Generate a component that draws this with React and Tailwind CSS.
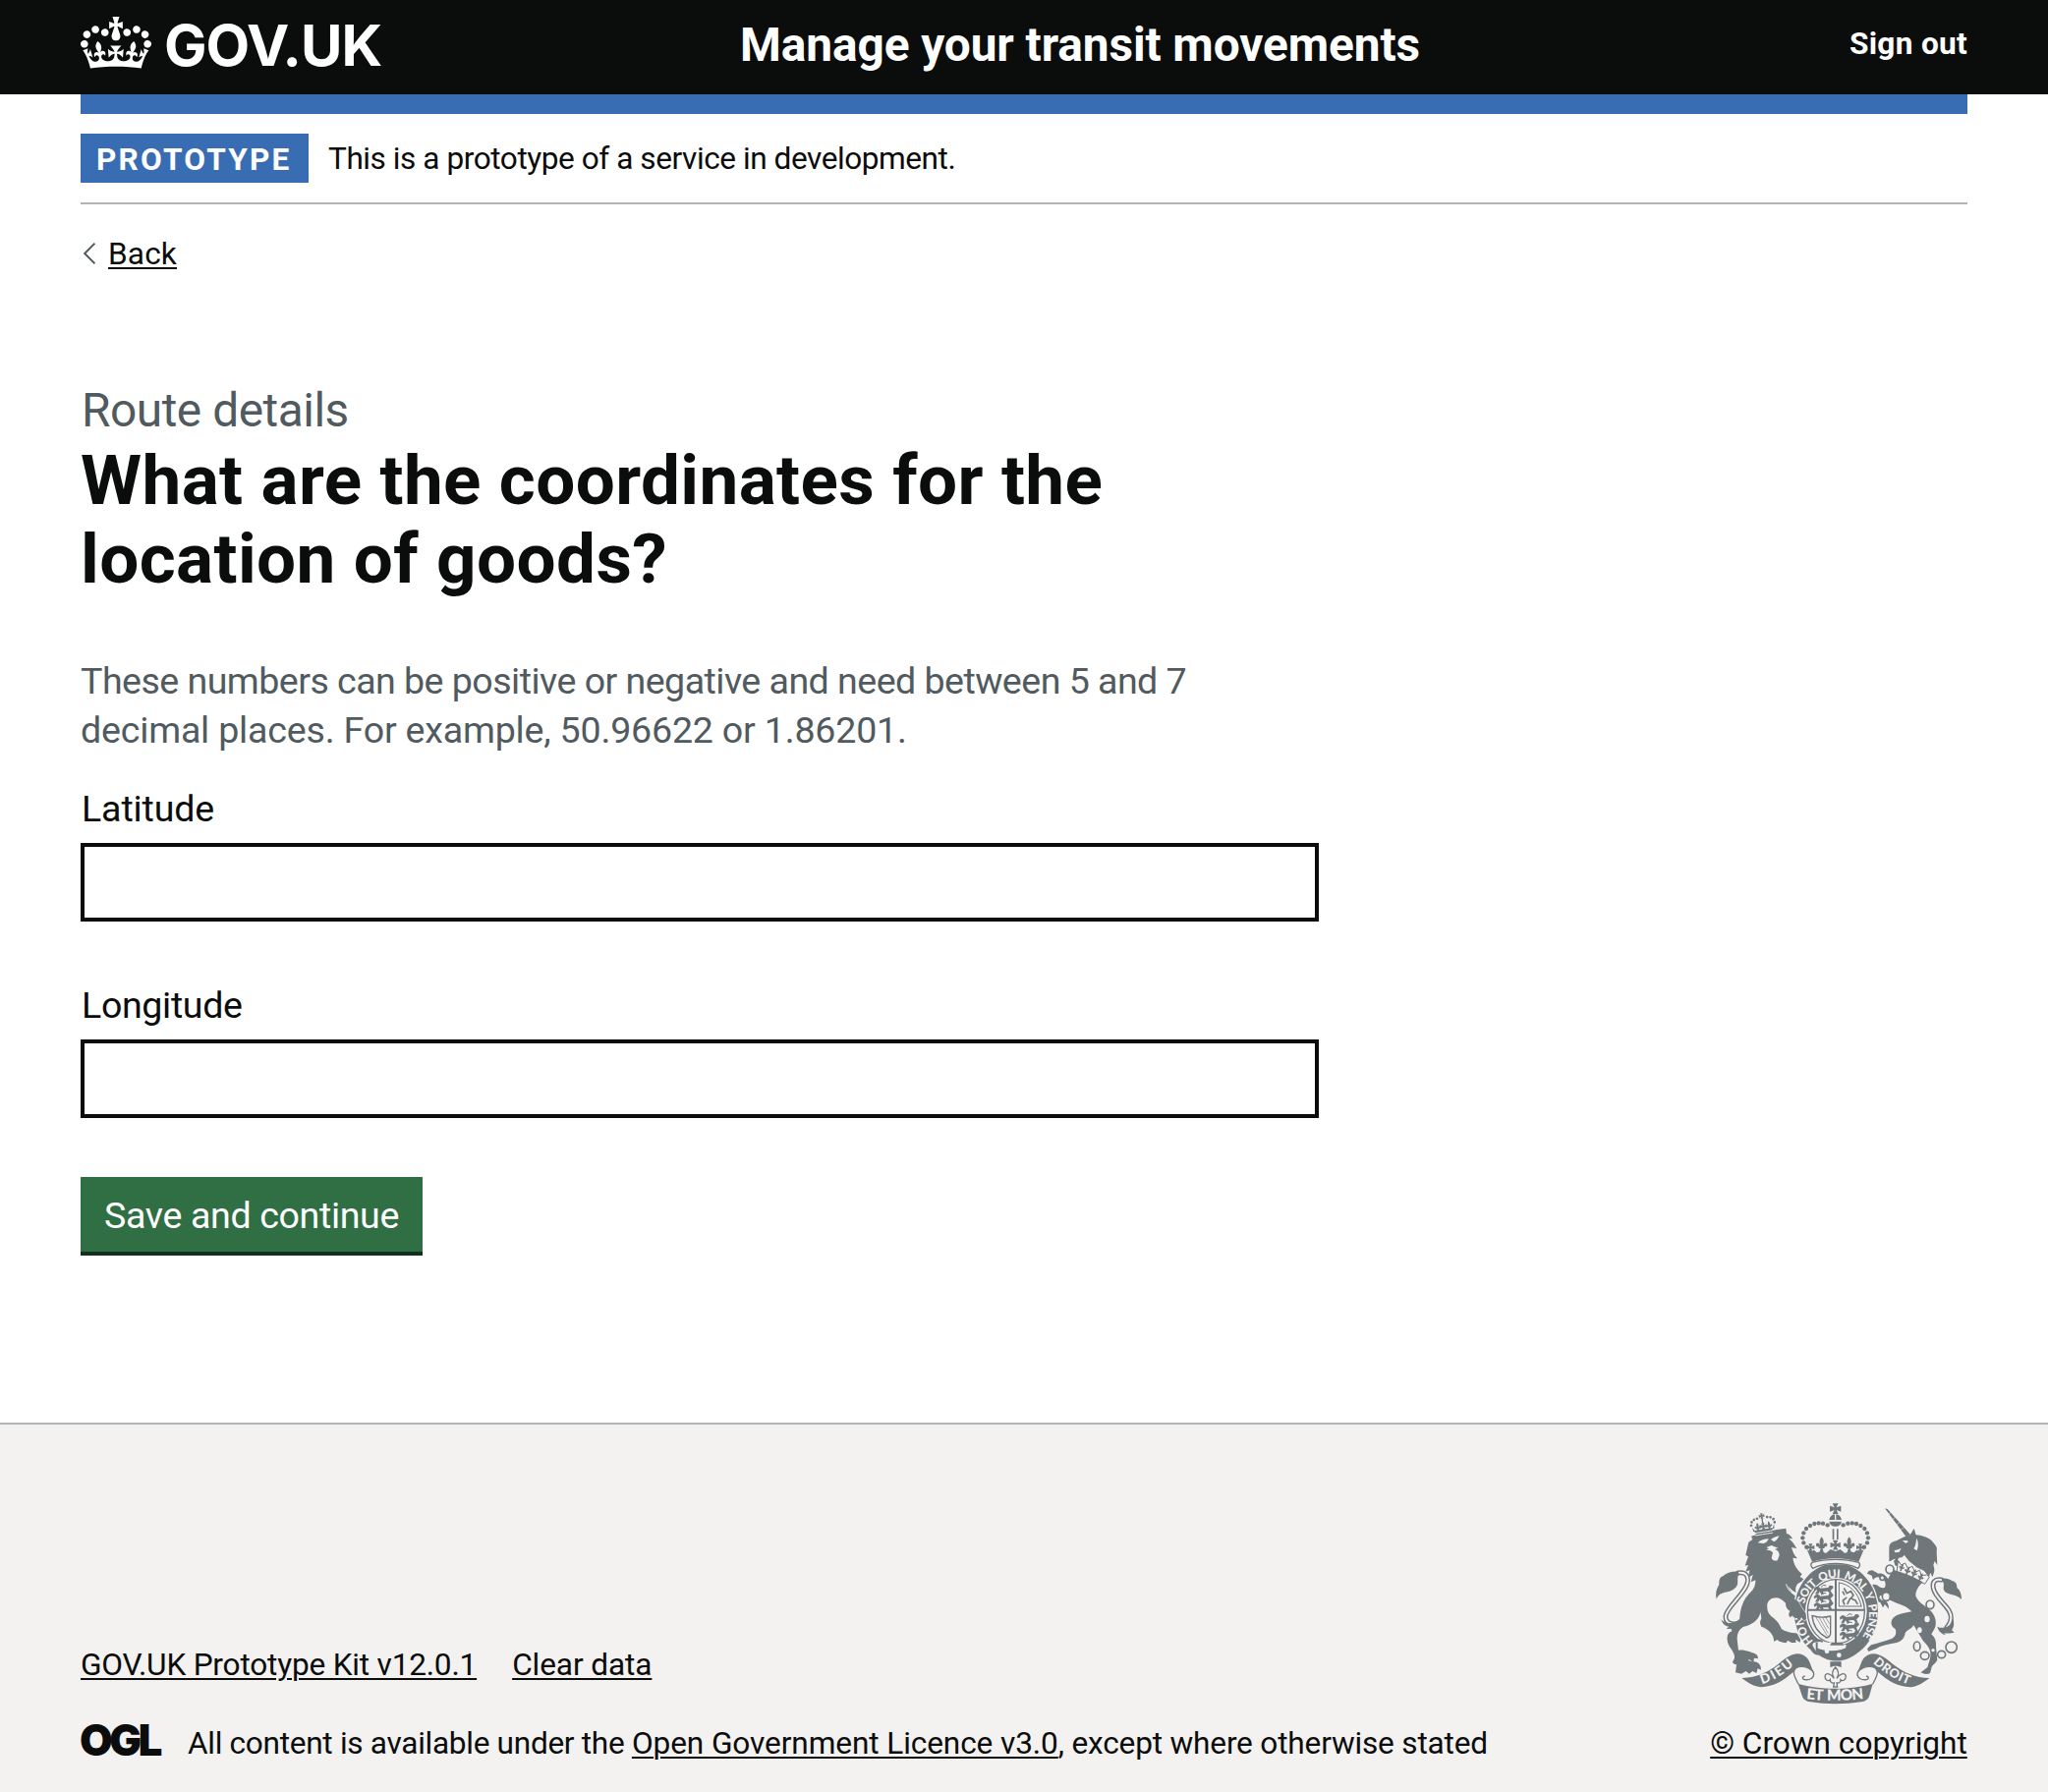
function Crown() {
  return (
    <svg viewBox="0 0 132 97" className="h-[53px] w-[72px] shrink-0 fill-white" aria-hidden="true">
      <path
        fillRule="evenodd"
        d="M25 30.2c3.5 1.5 7.7-.2 9.1-3.7 1.5-3.6-.2-7.8-3.9-9.2-3.6-1.4-7.6.3-9.1 3.9-1.4 3.5.3 7.5 3.9 9zM9 39.5c3.6 1.5 7.8-.2 9.2-3.7 1.5-3.6-.2-7.8-3.9-9.1-3.6-1.5-7.6.2-9.1 3.8-1.4 3.5.3 7.5 3.8 9zM4.4 57.2c3.5 1.5 7.7-.2 9.1-3.8 1.5-3.6-.2-7.7-3.9-9.1-3.5-1.5-7.6.3-9.1 3.8-1.4 3.5.3 7.6 3.9 9.1zm38.3-21.4c3.5 1.5 7.7-.2 9.1-3.8 1.5-3.6-.2-7.7-3.9-9.1-3.6-1.5-7.6.3-9.1 3.8-1.3 3.6.4 7.7 3.9 9.1zm64.4-5.6c-3.6 1.5-7.8-.2-9.1-3.7-1.5-3.6.2-7.8 3.8-9.2 3.6-1.4 7.7.3 9.2 3.9 1.3 3.5-.4 7.5-3.9 9zm15.9 9.3c-3.6 1.5-7.7-.2-9.1-3.7-1.5-3.6.2-7.8 3.7-9.1 3.6-1.5 7.7.2 9.2 3.8 1.5 3.5-.3 7.5-3.8 9zm4.7 17.7c-3.6 1.5-7.8-.2-9.2-3.8-1.5-3.6.2-7.7 3.9-9.1 3.6-1.5 7.7.3 9.2 3.8 1.3 3.5-.4 7.6-3.9 9.1zM89.3 35.8c-3.6 1.5-7.8-.2-9.2-3.8-1.4-3.6.2-7.7 3.9-9.1 3.6-1.5 7.7.3 9.2 3.8 1.4 3.6-.3 7.7-3.9 9.1zM69.7 17.7l8.9 4.7V9.3l-8.9 2.8c-.2-.3-.5-.6-.9-.9L72.4 0H59.6l3.5 11.2c-.3.3-.6.5-.9.9l-8.8-2.8v13.1l8.8-4.7c.3.3.6.7.9.9l-5 15.4v.1c-.2.8-.4 1.6-.4 2.4 0 4.1 3.1 7.5 7 8.1h.2c.3 0 .7.1 1 .1.4 0 .7 0 1-.1h.2c4-.6 7.1-4.1 7.1-8.1 0-.8-.1-1.7-.4-2.4V34l-5.1-15.4c.4-.2.7-.6 1-.9zM66 92.8c16.9 0 32.8 1.1 47.1 3.2 4-16.9 8.9-26.7 14-33.5l-9.6-3.4c1 4.9 1.1 7.2 0 10.2-1.5-1.4-3-4.3-4.2-8.7L108.6 76c2.8-2 5-3.2 7.5-3.3-4.4 9.4-10 11.9-13.6 11.2-4.3-.8-6.3-4.6-5.6-7.9 1-4.7 5.7-5.9 8-.5 4.3-8.7-3-11.4-7.6-8.8 7.1-7.2 7.9-13.5 2.1-21.1-8 6.1-8.1 12.3-4.5 20.8-4.7-5.4-12.1-2.5-9.5 6.2 3.4-5.2 7.9-2 7.2 3.1-.6 4.3-6.4 7.8-13.5 7.2-10.3-.9-10.9-8-11.2-13.8 2.5-.5 7.1 1.8 11 7.3L80.2 60c-4.1 4.4-8 5.3-12.3 5.4 1.4-4.4 8-11.6 8-11.6H55.5s6.4 7.2 7.9 11.6c-4.2-.1-8-1-12.3-5.4l1.4 16.4c3.9-5.5 8.5-7.7 10.9-7.3-.3 5.8-.9 12.8-11.1 13.8-7.2.6-12.9-2.9-13.5-7.2-.7-5 3.8-8.3 7.1-3.1 2.7-8.7-4.6-11.6-9.4-6.2 3.7-8.5 3.6-14.7-4.6-20.8-5.8 7.6-5 13.9 2.2 21.1-4.7-2.6-11.9.1-7.7 8.8 2.3-5.5 7.1-4.2 8.1.5.7 3.3-1.3 7.1-5.7 7.9-3.5.7-9-1.8-13.5-11.2 2.5.1 4.7 1.3 7.5 3.3l-4.7-15.4c-1.2 4.4-2.7 7.2-4.3 8.7-1.1-3-.9-5.3 0-10.2l-9.5 3.4c5 6.9 9.9 16.7 14 33.5 14.8-2.1 30.8-3.2 47.7-3.2z"
      />
    </svg>
  );
}

const G = "#6f777b";
const BG = "#f3f2f1";

const BEADS = [
  [419, 126], [405, 121], [392, 120], [379, 122], [366, 128], [354, 137],
  [346, 150], [343, 165], [346, 180], [355, 193],
];

function Fleur({ x, y, s = 1, r = 0 }) {
  return (
    <path
      transform={`translate(${x} ${y}) rotate(${r}) scale(${s})`}
      d="M0-22C7-13 8-7 4 3c5-9 14-8 13 1-1 5-6 5-7 2 0 7-5 8-7 7l3 12H-6l3-12c-2 1-7 0-7-7-1 3-6 3-7-2-1-9 8-10 13-1-4-10-3-16 4-25z"
    />
  );
}

function Cross({ x, y, s = 1 }) {
  return (
    <path
      transform={`translate(${x} ${y}) scale(${s})`}
      d="M-9-16H9L3-4 17-9V9L3 4l6 12H-9l6-12-14 5V-9l14 5z"
    />
  );
}

function Passant({ x, y }) {
  return (
    <g transform={`translate(${x} ${y})`}>
      <path d="M2 2l8-7 8 2 4 4 24-2 4-7 9 1 3 6-5 5-4 4 5 9-7 1-6-8-15 1 3 8-8 0-5-8-5 8-9-1 6-9-1-4-7 4z" />
      <path d="M24-3l8-6 8 2" fill="none" stroke={G} strokeWidth="3" />
    </g>
  );
}

function RibbonHalf() {
  return (
    <>
      <path
        fill={G}
        d="M157 593C200 592 235 577 268 551 290 533 305 520 328 519c22 1 32 14 38 30 4 12 8 21 12 27-14-8-22-16-34-16-10 1-20 6-30 15-30 26-58 44-99 46-22-2-40-14-58-28z"
      />
      <path
        fill={BG}
        stroke={G}
        strokeWidth="4"
        d="M330 612c-6-14-14-24-14-36 1-12 12-19 28-18 14 2 30 10 33 21 1 14-12 21-28 19-8-1-8-10 1-11"
      />
    </>
  );
}

function Crest({ className }) {
  return (
    <svg viewBox="78 57 750 616" className={className} fill={G} aria-hidden="true">
      {/* tails */}
      <g fill="none" strokeLinecap="round">
        <path stroke={G} strokeWidth="15" d="M146 272c22-4 34 8 28 32-8 32-64 74-66 100-1 14 8 22 22 24 16 2 28-6 34-20" />
        <path stroke={BG} strokeWidth="6" d="M146 272c22-4 34 8 28 32-8 32-64 74-66 100-1 14 8 22 22 24 16 2 28-6 34-20" />
        <path stroke={G} strokeWidth="15" d="M766 293c-20-4-28 8-24 26 8 36 56 58 54 90-1 14-6 22-14 30" />
        <path stroke={BG} strokeWidth="6" d="M766 293c-20-4-28 8-24 26 8 36 56 58 54 90-1 14-6 22-14 30" />
      </g>
      <path d="M146 268c-20-1-36 4-46 14-12 4-12 14-12 26-8 12-12 26-8 44 6-16 20-20 34-22 14-4 24-10 30-22 2-14-2-26 6-32z" />
      <path d="M94 414c10 12 28 14 42 8 10-4 20-12 24-20-2 18-8 28-18 34-10 8-22 8-32 6l8-6c-10 0-20-8-24-22z" />
      <path d="M766 289c14-2 24 0 34 8 12 2 14 12 14 20 10 8 14 20 14 36-8-10-22-14-34-16-18-4-24-14-20-26 0-10-4-16-8-22z" />
      <path d="M754 436c12 6 24 4 34-2 8-6 12-14 14-22 4 14 4 26-4 34l8 8c-12 2-22 4-32 2l6 6c-14-4-22-12-26-26z" />

      {/* lion */}
      <path d="M178 178l12-8-4-10c30-10 66-20 106-24l2 16c10 2 14 8 18 16l-12-2c10 8 18 18 25 32l-16-4c4 14 8 24 18 34l-14-2c2 16 8 28 18 40l10 10-6 8 14 8-22 14c-6 10-8 20-2 26-8-2-16-8-28-22 8 20 22 30 38 40l14 46-10 20c-8-2-6-10-10-14l-6 14c-8 0-10-8-8-16l-10 8c-6-6-6-12 0-20-10-4-14-14-14-24-12-14-26-20-42-14-12 6-16 16-14 28 0 16 10 26 22 34 10 8 16 18 22 32 10 6 26 12 44 12l16 8-4 20c-6-2-8-6-14-8l2 8c-12 4-20-2-26-6l-4 8c-16-2-24-6-28-10l-10 6c2-20-14-38-38-46-4-8-6-14 0-24l-2-20c-8 26-26 38-52 44-14 8-20 20-20 38l4 34c14-2 30 2 42 8 12 2 18 8 18 18l-12-2-2 12-14-8-8 14-10-10-22 12c-6-2-8-4-10-8l6-12c2-22-22-34-22-56-2-14 4-22 14-26l-2-8c16-6 26-18 26-34 2-30 12-58 32-76 12-10 16-22 16-38l-14 6 6-22-14 8 4-22-12 4 8-20-10 2 10-28-8-4 4-18z" />
      <path d="M142 544l16-8 44 8c10 4 14 12 14 24l-10-4-4 14-12-6-10 8-10-8-14 8-18-4z" />
      <g fill={BG}>
        <path d="M206 180c8-8 20-12 34-12l-8 10-8 4zM246 170c8-6 16-10 26-11l-8 12-8 6z" />
        <path d="M232 194l16-6 20 8-10 4c8 2 14 8 14 18l-6 16c-10 2-16-2-18-8l4-16c-4-6-10-8-20-8l8-4z" />
      </g>
      <path stroke={BG} strokeWidth="3" fill="none" d="M293 306c4 18 16 28 30 36" />
      {/* lion's crown */}
      <g transform="rotate(-9 220 125)">
        <path d="M193 139h56l-3 14h-50z" />
        <path stroke={BG} strokeWidth="2.5" d="M194 147h54M194 154h54" />
        {[[186, 122], [189, 112], [197, 106], [207, 104], [238, 104], [248, 106], [256, 113], [258, 123]].map(([x, y]) => (
          <circle key={`${x}-${y}`} cx={x} cy={y} r="4" />
        ))}
        <Cross x={222} y={98} s={0.5} />
        <Fleur x={205} y={129} s={0.55} />
        <Cross x={222} y={130} s={0.6} />
        <Fleur x={240} y={129} s={0.55} />
        <path d="M220 104h4v20h-4zM188 128l8 14h-6zM256 128l-8 14h6z" />
      </g>

      {/* unicorn */}
      <path d="M594 75l8 2 70 78-12 8z" />
      <path stroke={BG} strokeWidth="1.5" d="M606 92l6-4M618 108l7-5M630 124l9-6M643 140l9-6" />
      <path d="M607 198c0-12 4-18 14-22 12-2 18-8 32-14l18-6 12-20 6 20c22 2 40 8 52 22 8 10 14 14 11 28l2 42-8-12-4 12c6 16 2 24-3 37l-6-14-4 12-16-18-22-10-24-20-14-18c-2 4-8 10-14 8l-6 6 8 10-8 12-8-4-4-14 6-6c-8 0-12 6-20 8z" />
      <path fill={BG} d="M648 174c6-2 14-2 18 2l-8 6zM622 204l14-4 8-4-6 12-12 2zM690 166c8 12 6 26 2 38l-10-6c6-10 8-20 8-32z" />
      <path fill={BG} stroke={G} strokeWidth="3" d="M634 236l10 12 12-6 8 16 14-6 8 18 14-6 6 16 16-2 8 6-14 22c-28-16-56-24-86-34z" />
      <g>
        <Fleur x={646} y={254} s={0.5} r={20} />
        <Fleur x={664} y={264} s={0.55} r={20} />
        <Fleur x={684} y={272} s={0.55} r={24} />
        <Fleur x={704} y={284} s={0.55} r={26} />
      </g>
      <path d="M618 262c30 8 62 20 92 38-12 12-22 24-22 42 8 22 30 30 46 46 14 14 18 32 14 48-4 12-10 16-12 24 10 6 16 20 14 38l4 40c-6 10-12 14-16 18l-6 22c-8 4-18 4-28-2l20-16 8-26c6-28-8-40-22-56l-28-46c-8 12-20 14-26 24-2 16-12 26-30 30-22 4-44 8-60 18l-22 8-4-8 12-12c24-8 46-12 64-20 12-6 14-18 10-28-10-6-14-14-12-24 4-18 24-22 40-26l22-4c-10-12-26-20-46-26-14-4-26-12-38-22-10-4-16 0-14 8 6 6 12 8 20 8 6 6 8 14 8 24l-12-14-6 10-8-16c-12-2-20-8-24-18l-2-18-8-12c8-8 16-8 26-4 6 6 14 10 22 6 4-10 2-20-10-28-14-6-20-2-26 6l-4-14-14-6c2-8 8-10 16-10l18 10c12-2 22 4 30 16z" />
      <g fill={BG}>
        <ellipse cx="723" cy="413" rx="8" ry="10" />
        <ellipse cx="700" cy="447" rx="7" ry="9" />
        <circle cx="741" cy="508" r="5" />
      </g>
      <g fill={BG} stroke={G} strokeWidth="5">
        <ellipse cx="609" cy="261" rx="12" ry="13" />
        <ellipse cx="598" cy="344" rx="12" ry="13" />
        <circle cx="586" cy="287" r="7" />
        <ellipse cx="732" cy="369" rx="12" ry="13" />
        <ellipse cx="692" cy="496" rx="10" ry="14" />
        <ellipse cx="716" cy="525" rx="13" ry="12" />
        <ellipse cx="767" cy="521" rx="12" ry="11" />
        <circle cx="797" cy="499" r="17" />
      </g>

      {/* garter */}
      <ellipse cx="445" cy="390" rx="132" ry="151" fill={BG} />
      <ellipse cx="445" cy="390" rx="128" ry="147" />
      <ellipse cx="445" cy="390" rx="94" ry="104" fill={BG} />
      <ellipse cx="445" cy="390" rx="87" ry="98" fill="none" stroke={G} strokeWidth="4" />
      <defs>
        <path id="garter" d="M378 482A101 112 0 1 1 516 478" />
        <path id="dieu" d="M219 611Q270 598 326 545" />
        <path id="droit" d="M558 546Q602 590 672 615" />
        <path id="mon" d="M354 657Q443 667 536 655" />
      </defs>
      <g fill={BG} fontFamily="Lato" fontWeight="900" fontSize="35">
        <text>
          <textPath href="#garter" startOffset="2" textLength="96">HONI</textPath>
        </text>
        <text style={{ wordSpacing: "6px" }}>
          <textPath href="#garter" startOffset="124" textLength="376">SOIT QUI MAL Y PENSE</textPath>
        </text>
      </g>
      {/* lion's forepaw resting on the garter */}
      <path d="M306 340c12 10 20 18 26 26 8 10 12 20 20 28l3 18-8 6-8-10-4 8-8-4-2-8-10 4-4-10c2-10-4-20-18-30z" />
      <path stroke={BG} strokeWidth="2" fill="none" d="M322 352c8 6 14 14 18 24 4 8 10 14 15 20v18l-8 5-8-9" />
      {/* quarters */}
      <path d="M441 292h6v198h-6zM358 382h174v6H358z" />
      {[318, 342, 367].map((y) => (
        <Passant key={y} x={375} y={y} />
      ))}
      {[406, 431, 456].map((y) => (
        <Passant key={y} x={454} y={y} />
      ))}
      <g fill="none" stroke={G} strokeWidth="5" strokeLinecap="round">
        <path strokeWidth="3" d="M454 302v72h68M454 302c32 4 60 30 68 72" />
        <path d="M470 320l8 14 12-6 8 12-8 10 14 6 6 10M476 348l-10 8 4 12M488 350l-8 16M466 330l4 8" />
        <path strokeWidth="4" d="M372 402c16 6 34 8 56 2M372 402c2 26 14 50 42 66M428 404v54c-2 8-6 12-14 12" />
        <path strokeWidth="2" d="M384 408l34 56M394 409l26 46M404 409l18 32M414 408l10 18" />
      </g>
      {/* buckle and strap */}
      <path fill={BG} d="M368 486l28-4 40 4 40 6-8 52-76-20z" />
      <path d="M384 500c32 14 72 14 106-6l24 18c-36 36-92 38-126 6z" />
      <path fill="none" stroke={G} strokeWidth="6" d="M404 482c-18-12-36 0-34 16 2 18 16 26 30 18M386 484v30" />
      <circle cx="417" cy="511" r="7" fill={BG} />
      <circle cx="454" cy="523" r="7" fill={BG} />
      <path d="M432 484h30l8 9h-44z" />

      {/* crown */}
      <path fill={BG} d="M358 205l12 41h146l12-41z" />
      <path d="M356 200c6 6 14 6 22 2l8 8 14-4 14 6 14-12 15 6 15-6 14 12 14-6 14 4 8-8c8 4 16 4 22-2l-16 38c-40-14-102-14-142 0z" />
      <path fill={BG} stroke={G} strokeWidth="4" d="M372 240c42-12 100-12 142 0 6 6 4 12-2 18-40-20-98-20-138 0-6-6-8-12-2-18z" />
      <Cross x={443} y={76} />
      <path d="M424 110c2-10 8-16 17-17v17zM462 110c-2-10-8-16-17-17v17zM424 115h38c-2 10-8 15-19 15s-17-5-19-15z" />
      <path d="M434 138h5v32h-5zM447 138h5v32h-5z" />
      <Cross x={443} y={187} s={0.9} />
      <Fleur x={401} y={184} />
      <Fleur x={485} y={184} />
      <Cross x={367} y={194} s={0.7} />
      <Cross x={519} y={194} s={0.7} />
      {BEADS.map(([x, y]) => (
        <g key={`${x}-${y}`}>
          <circle cx={x} cy={y} r="6.5" />
          <circle cx={886 - x} cy={y} r="6.5" />
        </g>
      ))}

      {/* badge under the garter */}
      <path d="M427 543h34v18c-12-6-22-6-34 0z" />
      <g fill="none" stroke={G} strokeWidth="4">
        <path d="M443 560c10 10 12 22 4 34 8-14 26-20 28-6 0 12-10 16-16 10 0 8-6 12-12 10l2 12h-12l2-12c-6 2-12-2-12-10-6 6-16 2-16-10 2-14 20-8 28 6-8-12-6-24 4-34z" />
      </g>

      {/* motto ribbon */}
      <RibbonHalf />
      <g transform="translate(887 0) scale(-1 1)">
        <RibbonHalf />
      </g>
      <path d="M329 610c66 20 162 20 228 0l-10 36c-4 12-12 18-26 20-46 8-110 8-154 0-14-2-22-8-26-20z" />
      <g fill={BG} fontFamily="Lato" fontWeight="900">
        <text fontSize="40">
          <textPath href="#dieu" textLength="114">DIEU</textPath>
        </text>
        <text fontSize="38">
          <textPath href="#droit" textLength="128">DROIT</textPath>
        </text>
        <text fontSize="46" style={{ wordSpacing: "6px" }}>
          <textPath href="#mon" textLength="176">ET MON</textPath>
        </text>
      </g>
    </svg>
  );
}

function Field({ label, spacing }) {
  return (
    <label className="flex h-[150px] flex-col text-[37.6px] leading-[50px]">
      <span className={spacing}>{label}</span>
      <input className="mt-2.5 h-20 w-[1260px] border-4 border-[#0b0c0c] bg-white outline-none" />
    </label>
  );
}

const LINK = "underline decoration-2 underline-offset-[3px]";

export default function App() {
  return (
    <div className="flex h-[1824px] w-[2084px] flex-col overflow-hidden bg-white font-['Roboto',sans-serif] whitespace-nowrap text-[#0b0c0c]">
      <header className="h-24 shrink-0 bg-[#0b0c0c] px-[82px] text-white">
        <div className="flex h-full items-start">
          <a className="flex w-[671px] items-start pt-[17px]">
            <Crown />
            <span className="ml-[13px] font-['Inter',sans-serif] text-[58px] leading-[58px] font-bold tracking-[-1px]">GOV.UK</span>
          </a>
          <span className="mt-4 text-[47.8px] leading-[60px] font-bold tracking-[-0.09px]">Manage your transit movements</span>
          <a className="mt-[25px] ml-auto text-[31.6px] leading-[40px] font-bold tracking-[0.3px]">Sign out</a>
        </div>
      </header>

      <div className="mx-[82px] h-5 shrink-0 bg-[#386db4]" />

      <div className="mx-[82px] flex h-[92px] shrink-0 items-center gap-5 border-b-2 border-[#b1b4b6]">
        <strong className="h-[50px] w-[232px] bg-[#386db4] pt-px pl-4 text-[31.6px] leading-[52px] tracking-[2.2px] text-white">PROTOTYPE</strong>
        <span className="pt-0.5 text-[31.6px] leading-[40px] tracking-[-0.45px]">This is a prototype of a service in development.</span>
      </div>

      <main className="mx-[82px] flex flex-1 flex-col items-start">
        <a className="mt-[31px] flex items-center gap-[13px] text-[31.6px] leading-[40px]">
          <svg viewBox="0 0 12 22" className="mb-0.5 ml-[3px] h-[22px] w-3" fill="none" stroke="#505a5f" strokeWidth="2">
            <path d="M11.5.7 1.2 11l10.3 10.3" />
          </svg>
          <span className={`${LINK} tracking-[0.15px]`}>Back</span>
        </a>
        <span className="mt-[109px] pl-px text-[47.8px] leading-[60px] tracking-[-0.46px] text-[#505a5f]">Route details</span>
        <h1 className="mt-px text-[71px] leading-[80px] font-bold tracking-[0.4px]">
          What are the coordinates for the
          <br />
          location of goods?
        </h1>
        <p className="mt-[59px] text-[37.6px] leading-[50px] text-[#505a5f]">
          <span className="tracking-[-0.54px]">These numbers can be positive or negative and need between 5 and 7</span>
          <br />
          <span className="tracking-[-0.2px]">decimal places. For example, 50.96622 or 1.86201.</span>
        </p>
        <form className="mt-[30px] flex flex-col items-start gap-[50px]">
          <Field label="Latitude" spacing="pl-px tracking-[-0.15px]" />
          <Field label="Longitude" spacing="pl-px tracking-[-0.35px]" />
          <button className="h-20 w-[348px] border-b-4 border-[#12301e] bg-[#2f6f43] pt-0.5 text-[37.6px] leading-[50px] tracking-[-0.36px] text-white">
            Save and continue
          </button>
        </form>
      </main>

      <footer className="flex h-[376px] shrink-0 items-end justify-between border-t-2 border-[#b1b4b6] bg-[#f3f2f1] px-[82px] pb-[29px] text-[31.6px] leading-[40px]">
        <div className="flex flex-col gap-[40px]">
          <div className="flex gap-9">
            <a className={`${LINK} tracking-[-0.2px]`}>GOV.UK Prototype Kit v12.0.1</a>
            <a className={`${LINK} tracking-[-0.1px]`}>Clear data</a>
          </div>
          <div className="flex items-start">
            <span className="-mt-px -ml-px w-[110px] font-['Inter',sans-serif] text-[43.5px] leading-[34px] font-black tracking-[-3.4px]">OGL</span>
            <span className="tracking-[-0.3px]">All content is available under the&nbsp;</span>
            <a className={`${LINK} tracking-[-0.1px]`}>Open Government Licence v3.0</a>
            <span className="tracking-[-0.18px]">, except where otherwise stated</span>
          </div>
        </div>
        <div className="flex w-[262px] flex-col items-center gap-5">
          <Crest className="h-[206px] w-[250px]" />
          <a className={LINK}>© Crown copyright</a>
        </div>
      </footer>
    </div>
  );
}
